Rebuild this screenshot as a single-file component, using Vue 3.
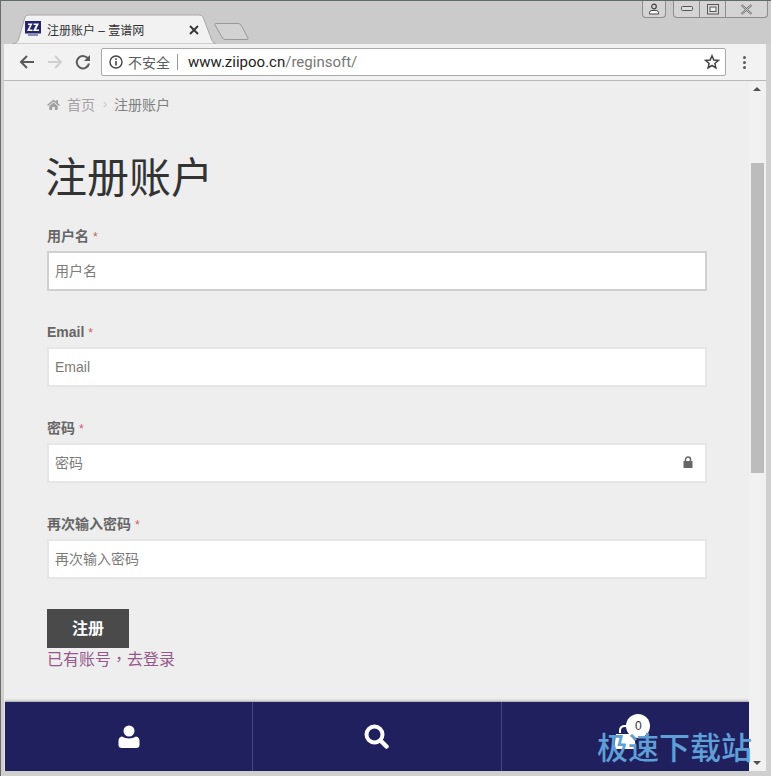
<script setup>
const fields = [
  { label: '用户名', focus: true },
  { label: 'Email' },
  { label: '密码', lock: true },
  { label: '再次输入密码' },
]
</script>

<template>
  <div class="window">
    <header class="tabstrip">
      <div class="tab">
        <svg class="tab-shape" width="204" height="30" viewBox="0 0 204 30">
          <path d="M0.500 30 C5 29 6 27 7 24 L13 3 Q14 1 17 1 L187 1 Q190 1 191 3 L199 24 C200 27 201 29 204 30 Z" fill="#f2f2f2" stroke="#a8a8a8" />
        </svg>
        <span class="favicon">
          <svg width="16" height="16" viewBox="0 0 16 16">
            <rect width="16" height="12.500" fill="#25256b" />
            <path d="M3 2.500h4.500L4.500 8.500H7.500V10H2L5 4H3zM8.500 2.500H14L11 8.500H14V10H8L11 4H8.500z" fill="#fff" />
            <rect x="3" y="13" width="10" height="2" fill="#8b8bb5" />
          </svg>
        </span>
        <span class="tab-title">注册账户 – 壹谱网</span>
        <svg class="tab-close" width="10" height="10" viewBox="0 0 10 10">
          <path d="M1 1l8 8M9 1l-8 8" stroke="#333" stroke-width="1.800" />
        </svg>
      </div>
      <svg class="newtab" width="36" height="19" viewBox="0 0 36 19">
        <path d="M1.500 1.500H24Q26 1.500 27 3L34 16Q34.500 17.500 33 17.500H11Q9.500 17.500 8.500 16L1 3Q0.500 1.500 1.500 1.500Z" fill="#d2d2d2" stroke="#999" />
      </svg>
      <div class="winctl">
        <div class="ctl ctl-user">
          <svg width="12" height="12" viewBox="0 0 12 12">
            <circle cx="6" cy="3.500" r="2.300" fill="none" stroke="#444" stroke-width="1.200" />
            <path d="M1.500 11V9.500Q1.500 7.500 4 7.500H8Q10.500 7.500 10.500 9.500V11Z" fill="#fff" stroke="#444" />
          </svg>
        </div>
        <div class="ctl-group">
          <div class="ctl-cell">
            <svg width="12" height="6" viewBox="0 0 12 6"><rect x="0.500" y="0.500" width="11" height="4" rx="1" fill="#ddd" stroke="#555" /></svg>
          </div>
          <div class="ctl-cell">
            <svg width="12" height="11" viewBox="0 0 12 11"><rect x="0.500" y="0.500" width="11" height="9.500" fill="#ddd" stroke="#555" /><rect x="3" y="3" width="6" height="4.500" fill="#eee" stroke="#555" /></svg>
          </div>
          <div class="ctl-cell ctl-close">
            <svg width="13" height="11" viewBox="0 0 13 11"><path d="M1.500 1l10 9M11.500 1l-10 9" stroke="#666" stroke-width="2.200" /><path d="M1.500 1l10 9M11.500 1l-10 9" stroke="#eee" stroke-width="0.800" /></svg>
          </div>
        </div>
      </div>
    </header>

    <div class="toolbar">
      <svg class="tool" width="16" height="16" viewBox="0 0 16 16">
        <path d="M15 8H2.500M8 2L2 8l6 6" fill="none" stroke="#5a5a5a" stroke-width="2" />
      </svg>
      <svg class="tool tool-gap" width="16" height="16" viewBox="0 0 16 16">
        <path d="M1 8h12.500M8 2l6 6-6 6" fill="none" stroke="#cfcfcf" stroke-width="2" />
      </svg>
      <svg class="tool tool-gap" width="16" height="16" viewBox="0 0 16 16">
        <path d="M13.500 5.500A6.200 6.200 0 1 0 14 9.500" fill="none" stroke="#5a5a5a" stroke-width="2" />
        <path d="M15 1v6h-6z" fill="#5a5a5a" />
      </svg>
      <div class="omnibox">
        <svg width="14" height="14" viewBox="0 0 14 14">
          <circle cx="7" cy="7" r="6" fill="none" stroke="#444" stroke-width="1.400" />
          <rect x="6.200" y="6" width="1.600" height="4.500" fill="#444" />
          <rect x="6.200" y="3.300" width="1.600" height="1.600" fill="#444" />
        </svg>
        <span class="insecure">不安全</span>
        <span class="omni-sep"></span>
        <span class="url">www.ziipoo.cn<span class="url-path">/reginsoft/</span></span>
        <svg class="star" width="16" height="16" viewBox="0 0 16 16">
          <path d="M8 1.800l1.800 4.200 4.500 0.400-3.400 3 1 4.500L8 11.500l-3.900 2.400 1-4.500-3.400-3 4.500-0.400z" fill="none" stroke="#444" stroke-width="1.500" />
        </svg>
      </div>
      <div class="menu-dots"><i></i><i></i><i></i></div>
    </div>

    <div class="viewport">
      <div class="page">
        <main class="content">
          <nav class="crumbs">
            <svg width="13" height="11" viewBox="0 0 13 11">
              <path d="M6.500 0.500L0 6l1 1 5.500-4.500L12 7l1-1-2-1.700V1H9.300v1.800z M2.300 7L6.500 3.500 10.700 7v4H7.800V8H5.200v3H2.300z" fill="#a0a0a0" />
            </svg>
            <span class="crumb-home">首页</span>
            <span class="crumb-sep">›</span>
            <span class="crumb-now">注册账户</span>
          </nav>
          <h1 class="title">注册账户</h1>
          <form class="form" @submit.prevent>
            <div v-for="f in fields" :key="f.label" class="field">
              <label class="label">{{ f.label }} <span class="req">*</span></label>
              <div class="input-wrap">
                <input class="input" :class="{ focus: f.focus }" :placeholder="f.label" />
                <svg v-if="f.lock" class="lock" width="10" height="12" viewBox="0 0 10 12">
                  <path d="M2.500 5.500V3.500a2.500 2.500 0 0 1 5 0v2" fill="none" stroke="#666" stroke-width="1.500" />
                  <rect x="0.500" y="5" width="9" height="7" fill="#666" />
                </svg>
              </div>
            </div>
            <button class="submit" type="submit">注册</button>
          </form>
          <a class="login">已有账号<span class="comma">，</span>去登录</a>
        </main>
        <footer class="dock">
          <div class="dock-cell">
            <svg width="22" height="24" viewBox="0 0 22 24">
              <circle cx="11" cy="6" r="5.500" fill="#fff" />
              <path d="M0.500 20v-4Q0.500 12 4 11.500Q7 13.500 11 13.500T18 11.500Q21.500 12 21.500 16v4Q21.500 23 18 23H4Q0.500 23 0.500 20Z" fill="#fff" />
            </svg>
          </div>
          <div class="dock-cell">
            <svg width="25" height="25" viewBox="0 0 25 25">
              <circle cx="10.500" cy="10.500" r="8" fill="none" stroke="#fff" stroke-width="4" />
              <path d="M16.500 16.500l6 6" stroke="#fff" stroke-width="4.500" stroke-linecap="round" />
            </svg>
          </div>
          <div class="dock-cell">
            <span class="bag">
              <svg width="24" height="26" viewBox="0 0 24 26">
                <path d="M7 9V6.500Q7 2 12 2T17 6.500V9" fill="none" stroke="#fff" stroke-width="2" />
                <path d="M3 10H21L23 25H1Z" fill="#fff" />
              </svg>
              <span class="badge">0</span>
            </span>
          </div>
        </footer>
      </div>
      <aside class="scrollbar">
        <span class="arrow-up"></span>
        <div class="thumb"></div>
        <span class="arrow-down"></span>
      </aside>
    </div>
    <div class="watermark">极速下载站</div>
  </div>
</template>

<style>
html, body { margin: 0; padding: 0; background: #ccc; }
</style>

<style scoped>
.window {
  position: relative;
  width: 771px;
  height: 776px;
  box-sizing: border-box;
  padding: 0 5px 5px 3px;
  background: #d0d0d0;
  border-top: 1px solid #5f6b66;
  border-left: 1px solid #6b6b6b;
  display: flex;
  flex-direction: column;
  overflow: hidden;
  font-family: "Liberation Sans", "Noto Sans CJK SC", sans-serif;
}
.tabstrip {
  position: relative;
  height: 43px;
  flex: none;
  background: #cbcbcb;
  margin-left: -3px;
  margin-right: -5px;
}
.tab {
  position: absolute;
  left: 11px;
  top: 13px;
  width: 204px;
  height: 30px;
  display: flex;
  align-items: center;
  padding-left: 13px;
  box-sizing: border-box;
}
.tab-shape { position: absolute; left: 0; top: 0; }
.favicon { position: relative; width: 16px; height: 16px; display: flex; }
.tab-title {
  position: relative;
  margin-left: 6px;
  font-size: 12px;
  color: #333;
  white-space: nowrap;
}
.tab-close { position: absolute; left: 177px; top: 11px; }
.newtab { position: absolute; left: 213px; top: 21px; }
.winctl { position: absolute; right: 3px; top: 0; display: flex; gap: 7px; }
.ctl {
  width: 24px;
  height: 17px;
  box-sizing: border-box;
  background: #d4d4d4;
  border: 1px solid #8c8c8c;
  border-top: none;
  border-radius: 0 0 4px 4px;
  display: flex;
  align-items: center;
  justify-content: center;
}
.ctl-group {
  display: flex;
  height: 17px;
  box-sizing: border-box;
  background: #d4d4d4;
  border: 1px solid #8c8c8c;
  border-top: none;
  border-radius: 0 0 4px 4px;
}
.ctl-cell {
  width: 25px;
  display: flex;
  align-items: center;
  justify-content: center;
  border-right: 1px solid #8c8c8c;
}
.ctl-close { width: 41px; border-right: none; }
.toolbar {
  flex: none;
  height: 37px;
  box-sizing: border-box;
  background: #f2f2f2;
  border-bottom: 1px solid #b9b9b9;
  display: flex;
  align-items: center;
  padding: 0 0 0 15px;
}
.tool { flex: none; }
.tool-gap { margin-left: 12px; }
.omnibox {
  margin-left: 10px;
  width: 625px;
  height: 28px;
  box-sizing: border-box;
  background: #fff;
  border: 1px solid #a9a9a9;
  border-radius: 2px;
  display: flex;
  align-items: center;
  padding: 0 5px 0 7px;
}
.insecure { margin-left: 5px; font-size: 14px; color: #5c5c5c; }
.omni-sep { width: 1px; height: 16px; background: #999; margin: 0 10px 0 7px; }
.url { font-family: Roboto, "Liberation Sans", sans-serif; font-size: 15px; color: #222; }
.url-path { color: #777; }
.star { margin-left: auto; }
.menu-dots { margin-left: 17px; display: flex; flex-direction: column; gap: 2px; }
.menu-dots i { width: 3px; height: 3px; border-radius: 50%; background: #5a5a5a; display: block; }
.viewport { flex: 1; display: flex; min-height: 0; }
.page {
  width: 745px;
  display: flex;
  flex-direction: column;
  background: #eee;
}
.content {
  flex: 1;
  min-height: 0;
  padding-left: 43px;
  padding-right: 42px;
}
.crumbs {
  height: 16px;
  margin-top: 15px;
  display: flex;
  align-items: center;
  font-size: 14px;
  color: #a3a3a3;
}
.crumb-home { margin-left: 7px; }
.crumb-sep { margin: 0 7px 0 8px; color: #c5c5c5; font-size: 12px; }
.crumb-now { color: #808080; }
.title {
  margin: 42px 0 0 -2px;
  height: 56px;
  font-size: 42px;
  line-height: 50px;
  font-weight: 400;
  color: #333;
}
.form { margin-top: 0; }
.field { height: 96px; padding-top: 17px; box-sizing: border-box; display: flex; flex-direction: column; }
.label {
  height: 18px;
  line-height: 18px;
  margin-bottom: 6px;
  font-size: 14px;
  font-weight: 700;
  color: #666;
}
.req { color: #c46060; font-weight: 400; font-size: 12px; }
.input-wrap { position: relative; }
.input {
  display: block;
  width: 100%;
  height: 40px;
  box-sizing: border-box;
  background: #fff;
  border: 2px solid #e6e6e6;
  padding: 0 6px;
  font-size: 14px;
  font-family: "Liberation Sans", "Noto Sans CJK SC", sans-serif;
  outline: none;
}
.input.focus { border-color: #d0d0d0; }
.input::placeholder { color: #7b7b7b; opacity: 1; }
.lock { position: absolute; right: 14px; top: 13px; }
.submit {
  display: block;
  width: 82px;
  height: 39px;
  margin-top: 15px;
  padding: 0 0 4px;
  border: none;
  background: #4a4a4a;
  color: #fff;
  font-size: 16px;
  font-weight: 700;
  font-family: "Liberation Sans", "Noto Sans CJK SC", sans-serif;
}
.login { display: block; font-size: 16px; line-height: 20px; color: #96588a; }
.comma { font-family: "Noto Sans CJK TC", sans-serif; }
.dock {
  flex: none;
  height: 70px;
  box-sizing: border-box;
  background: #20205f;
  border-top: 1px solid #b5b5b5;
  box-shadow: 0 -1px 2px rgba(0, 0, 0, 0.150);
  margin-left: 1px;
  display: flex;
  position: relative;
}
.dock-cell {
  flex: 1 1 0;
  box-sizing: border-box;
  display: flex;
  align-items: center;
  justify-content: center;
  border-right: 1px solid #45458a;
}
.dock-cell:last-child { border-right: none; }
.bag { position: relative; display: flex; }
.badge {
  position: absolute;
  left: 13px;
  top: -10px;
  width: 24px;
  height: 24px;
  border-radius: 50%;
  background: #fff;
  color: #333;
  font-size: 12px;
  line-height: 24px;
  text-align: center;
}
.scrollbar {
  width: 17px;
  position: relative;
  background: #f1f1f1;
}
.thumb {
  position: absolute;
  top: 82px;
  left: 2px;
  width: 13px;
  height: 310px;
  background: #bcbcbc;
}
.arrow-up, .arrow-down {
  position: absolute;
  left: 4px;
  width: 0;
  height: 0;
  border-left: 4px solid transparent;
  border-right: 4px solid transparent;
}
.arrow-up { top: 6px; border-bottom: 4px solid #505050; }
.arrow-down { bottom: 6px; border-top: 4px solid #505050; }
.watermark {
  position: absolute;
  left: 596px;
  top: 726px;
  font-family: "Noto Sans CJK SC", sans-serif;
  font-size: 31px;
  line-height: 38px;
  font-weight: 500;
  color: #5f9fd6;
  white-space: nowrap;
}
</style>
